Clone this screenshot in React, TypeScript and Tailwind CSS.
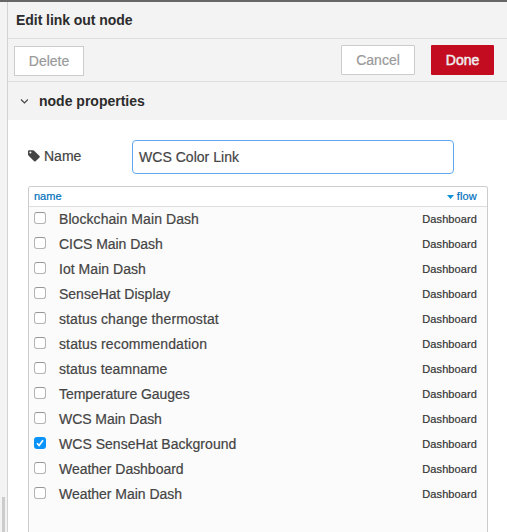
import React from "react";

type Row = { name: string; checked?: boolean; fit: string };

const rows: Row[] = [
  { name: "Blockchain Main Dash", fit: "tracking-[0.07px]" },
  { name: "CICS Main Dash", fit: "tracking-[-0.04px]" },
  { name: "Iot Main Dash", fit: "tracking-[0.04px]" },
  { name: "SenseHat Display", fit: "tracking-[0px]" },
  { name: "status change thermostat", fit: "tracking-[0.11px]" },
  { name: "status recommendation", fit: "tracking-[0.12px]" },
  { name: "status teamname", fit: "tracking-[0.07px]" },
  { name: "Temperature Gauges", fit: "tracking-[-0.04px]" },
  { name: "WCS Main Dash", fit: "tracking-[-0.05px]" },
  { name: "WCS SenseHat Background", checked: true, fit: "tracking-[0.03px]" },
  { name: "Weather Dashboard", fit: "tracking-[-0.03px]" },
  { name: "Weather Main Dash", fit: "tracking-[-0.03px]" },
];

function Checkbox({ checked }: { checked?: boolean }) {
  return (
    <span
      role="checkbox"
      aria-checked={!!checked}
      className={
        checked
          ? "mt-[5px] block size-3 shrink-0 rounded-[3px] bg-[#0a93fb]"
          : "mt-[5px] block size-3 shrink-0 rounded-[3px] border border-[#b4b4b4] border-t-[#969696] bg-white"
      }
    >
      {checked && (
        <svg viewBox="0 0 12 12" className="block size-3" fill="none" stroke="#fff" strokeWidth="1.7">
          <path d="M3 6.2 5.1 8.5 9 3.2" />
        </svg>
      )}
    </span>
  );
}

function TagIcon() {
  return (
    <svg viewBox="0 0 12 12" className="mt-[10px] mr-1 block size-3 shrink-0" fill="#444">
      <path
        fillRule="evenodd"
        d="M0 1.2Q0 .2 1 .2H4.8Q5.7 .2 6.4 .9L11.5 6Q12.1 6.7 11.5 7.4L7.6 11.3Q6.9 11.9 6.2 11.3L.9 6Q0 5.1 0 4.2ZM2.4 1.6A1 1 0 1 0 2.4 3.6 1 1 0 1 0 2.4 1.6Z"
      />
    </svg>
  );
}

export default function App() {
  return (
    <div className="flex h-[532px] w-[507px] flex-col overflow-hidden border-t-2 border-[#666] bg-white font-['Liberation_Sans',Arial,sans-serif] text-sm text-[#444] [-webkit-text-stroke:0.2px_currentColor]">
      <div className="flex min-h-0 flex-1">
        <div className="flex w-2 shrink-0 flex-col items-end justify-end border-r border-[#d3d3d3] bg-[#f3f3f3]">
          <div className="mr-0.5 h-[35px] w-[3px] bg-[#ccc]" />
        </div>
        <main className="flex min-w-0 flex-1 flex-col">
          <header className="h-[37px] border-b border-[#ddd] bg-[#f3f3f3] pl-2 leading-9 font-bold text-[#2c2c2c] [-webkit-text-stroke:0px]">
            <span className="tracking-[-0.05px]">Edit link out node</span>
          </header>
          <div className="flex h-[43px] items-start border-b border-[#ddd] bg-[#f3f3f3] pr-[13px] pl-1.5">
            <button className="mt-[7px] h-[30px] w-[70px] border border-[#ccc] bg-white text-[#999]">Delete</button>
            <button className="mt-1.5 ml-auto h-[30px] w-[74px] rounded-[1px] border border-[#ccc] bg-white text-[#999]">Cancel</button>
            <button className="mt-1.5 ml-4 h-[30px] w-[63px] rounded-[1px] bg-[#c40c20] text-[#eee] [-webkit-text-stroke:0.5px_#eee]">Done</button>
          </div>
          <div className="flex h-[38px] items-center bg-[#f3f3f3] font-bold text-[#2c2c2c] [-webkit-text-stroke:0px]">
            <svg viewBox="0 0 8 5" className="mr-[11px] ml-3 h-[5px] w-2" fill="none" stroke="#444" strokeWidth="1.2">
              <path d="M1 .5 4.5 4 8 .5" />
            </svg>
            <span>node properties</span>
          </div>
          <section className="flex min-h-0 flex-1 flex-col pt-5 pr-[19px] pl-5">
            <div className="flex h-[34px] shrink-0 leading-[33px]">
              <TagIcon />
              <span className="w-[88px]">Name</span>
              <div className="h-[34px] w-[322px] rounded-[4px] border border-[#60a8ec] bg-white pl-1.5 tracking-[0.03px] leading-8">WCS Color Link</div>
            </div>
            <div className="mt-3 flex min-h-0 flex-1 flex-col rounded-t-[3px] border border-b-0 border-[#ccc] bg-[#fbfbfb]">
              <div className="flex h-5 shrink-0 items-center justify-between rounded-t-[2px] border-b border-[#ddd] bg-white pt-px pr-2.5 pl-[5px] text-[11px] text-[#0070bd]">
                <span>name</span>
                <span className="flex items-center gap-[3px] tracking-[0.2px]">
                  <svg viewBox="0 0 7 4" className="h-1 w-[7px]" fill="#0a93d8">
                    <path d="M0 0H7L3.5 4Z" />
                  </svg>
                  flow
                </span>
              </div>
              {rows.map((row) => (
                <div key={row.name} className="flex h-[25px] shrink-0 pr-2.5 pl-[5px] leading-[25px]">
                  <Checkbox checked={row.checked} />
                  <span className={"ml-[13px] whitespace-nowrap " + row.fit}>{row.name}</span>
                  <span className="ml-auto text-[11px] tracking-[0.1px] text-[#333]">Dashboard</span>
                </div>
              ))}
            </div>
          </section>
        </main>
      </div>
    </div>
  );
}
